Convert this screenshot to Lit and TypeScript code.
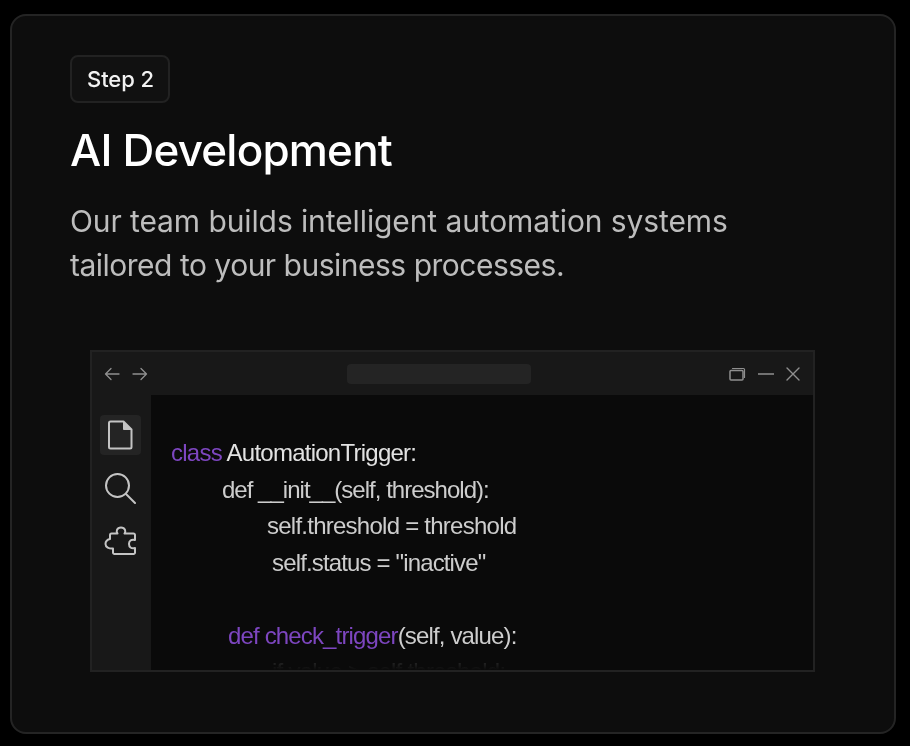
import { LitElement, html, css, svg } from 'lit';
import { customElement } from 'lit/decorators.js';

type Part = { text: string; kw?: boolean };
type Line = { indent: number; track: number; parts: Part[] };

// indent is measured from the left edge of the code column, track is letter-spacing
const CODE: Line[] = [
  { indent: 0, track: -0.75, parts: [{ text: 'class', kw: true }, { text: ' AutomationTrigger:' }] },
  { indent: 51, track: -0.98, parts: [{ text: 'def __init__(self, threshold):' }] },
  { indent: 96, track: -0.75, parts: [{ text: 'self.threshold = threshold' }] },
  { indent: 101, track: -0.85, parts: [{ text: 'self.status = "inactive"' }] },
  { indent: 0, track: 0, parts: [{ text: '\u00a0' }] },
  { indent: 57, track: -0.85, parts: [{ text: 'def check_trigger', kw: true }, { text: '(self, value):' }] },
  { indent: 101, track: -0.75, parts: [{ text: 'if value > self.threshold:' }] },
];

const icon = (w: number, h: number, body: unknown) => html`<svg
  width=${w}
  height=${h}
  viewBox="0 0 ${w} ${h}"
  fill="none"
  stroke="currentColor"
  stroke-linecap="round"
  stroke-linejoin="round"
>${body}</svg>`;

@customElement('app-root')
export class AppRoot extends LitElement {
  static styles = css`
    :host {
      display: block;
      height: 746px;
      box-sizing: border-box;
      padding: 14px 14px 12px 10px;
      background: #000;
      font-family: 'Inter', 'Liberation Sans', sans-serif;
    }
    .card {
      box-sizing: border-box;
      height: 100%;
      background: #0d0d0d;
      border: 2px solid #242424;
      border-radius: 16px;
      padding: 39px 79px 0 58px;
      overflow: hidden;
      filter: blur(0.35px);
    }
    .badge {
      display: inline-flex;
      align-items: center;
      justify-content: center;
      box-sizing: border-box;
      width: 100px;
      height: 48px;
      padding-left: 1px;
      background: #111;
      border: 2px solid #222;
      border-radius: 8px;
      color: #f2f2f2;
      font-size: 22px;
      font-weight: 500;
      letter-spacing: -0.1px;
    }
    h1 {
      margin: 16px 0 0;
      color: #fff;
      font-size: 44px;
      line-height: 62px;
      font-weight: 500;
      letter-spacing: -0.8px;
    }
    p {
      margin: 18px 0 0;
      color: #bdbdbd;
      font-size: 30px;
      line-height: 44px;
      font-weight: 400;
    }
    p span {
      display: block;
    }
    .first {
      letter-spacing: -0.1px;
    }
    .second {
      letter-spacing: -0.5px;
    }
    .window {
      box-sizing: border-box;
      width: 725px;
      height: 322px;
      margin: 63px 0 0 20px;
      display: grid;
      grid-template-columns: 59px 1fr;
      grid-template-rows: 43px 1fr;
      background: #181818;
      border: 2px solid #222;
      overflow: hidden;
    }
    .bar {
      grid-column: 1 / -1;
      display: flex;
      align-items: center;
      padding: 0 12px;
      color: #8f8f8f;
    }
    .nav {
      display: flex;
      gap: 12px;
      width: 44px;
    }
    .address {
      width: 184px;
      height: 20px;
      margin-left: 199px;
      border-radius: 4px;
      background: #242424;
    }
    .controls {
      display: flex;
      align-items: center;
      gap: 12px;
      margin-left: auto;
      margin-right: 1px;
    }
    .side {
      display: flex;
      flex-direction: column;
      align-items: center;
      padding: 20px 3px 0 0;
      color: #c4c4c4;
    }
    .tool {
      display: flex;
      align-items: center;
      justify-content: center;
      width: 41px;
      height: 40px;
      margin-bottom: 13px;
      border-radius: 4px;
    }
    .tool.active {
      background: #242424;
    }
    .editor {
      position: relative;
      background: #0a0a0a;
      padding: 40px 0 0 20px;
      overflow: hidden;
      font-family: 'Liberation Sans', Arial, sans-serif;
      font-size: 24px;
      line-height: 36.5px;
      color: #cdcdcd;
    }
    .editor .code-line {
      white-space: pre;
    }
    .editor .kw {
      color: #7d46c0;
    }
    .editor .strong {
      color: #e2e2e2;
    }
    .fade {
      position: absolute;
      left: 0;
      right: 0;
      bottom: 0;
      height: 16px;
      background: linear-gradient(to bottom, rgba(10, 10, 10, 0.72), #0a0a0a);
    }
  `;

  render() {
    return html`
      <section class="card">
        <span class="badge">Step 2</span>
        <h1>AI Development</h1>
        <p>
          <span class="first">Our team builds intelligent automation systems</span>
          <span class="second">tailored to your business processes.</span>
        </p>
        <div class="window">
          <div class="bar">
            <div class="nav">
              ${icon(16, 14, svg`<path d="M15 7H1.500M7 1.500 1.500 7 7 12.500" stroke-width="1.300" />`)}
              ${icon(16, 14, svg`<path d="M1 7h13.500M9 1.500 14.500 7 9 12.500" stroke-width="1.300" />`)}
            </div>
            <div class="address"></div>
            <div class="controls">
              ${icon(17, 14, svg`<rect x="1" y="3.500" width="13" height="9.500" rx="1" stroke-width="1.500" /><path d="M3.500 1.500h11a1 1 0 0 1 1 1v8" stroke-width="1.200" />`)}
              ${icon(16, 14, svg`<path d="M0.500 7h15" stroke-width="1.600" />`)}
              ${icon(14, 14, svg`<path d="M1 1 13 13M13 1 1 13" stroke-width="1.400" />`)}
            </div>
          </div>
          <div class="side">
            <div class="tool active">
              ${icon(26, 30, svg`<path d="M2 3a1.500 1.500 0 0 1 1.500-1.500H16.500L24.500 9.500V27a1.500 1.500 0 0 1-1.500 1.500H3.500A1.500 1.500 0 0 1 2 27Z" stroke-width="2" /><path d="M16.500 1.500V9.500H24.500" stroke-width="1" fill="#c4c4c4" />`)}
            </div>
            <div class="tool">
              ${icon(32, 32, svg`<circle cx="13.500" cy="13.500" r="11.500" stroke-width="2" /><path d="M22 22 31 31" stroke-width="2" />`)}
            </div>
            <div class="tool">
              ${icon(32, 30, svg`<path d="M7.500 7.500H13.500C12 6 12.500 1.500 17 1.500S22 6 20.500 7.500H29.500A1.500 1.500 0 0 1 31 9V14C27 13 25 15 25 18S27 23 31 22V26.500A1.500 1.500 0 0 1 29.500 28H10.500A1.500 1.500 0 0 1 9 26.500V22.500C5 23 1.500 21 1.500 18S4 13.500 6 13V9A1.500 1.500 0 0 1 7.500 7.500Z" stroke-width="2" />`)}
            </div>
          </div>
          <div class="editor">
            ${CODE.map(
              (line, i) => html`<div class="code-line" style="padding-left:${line.indent}px;letter-spacing:${line.track}px">${line.parts.map(
                (part) => html`<span class=${part.kw ? 'kw' : i === 0 ? 'strong' : ''}>${part.text}</span>`
              )}</div>`
            )}
            <div class="fade"></div>
          </div>
        </div>
      </section>
    `;
  }
}
